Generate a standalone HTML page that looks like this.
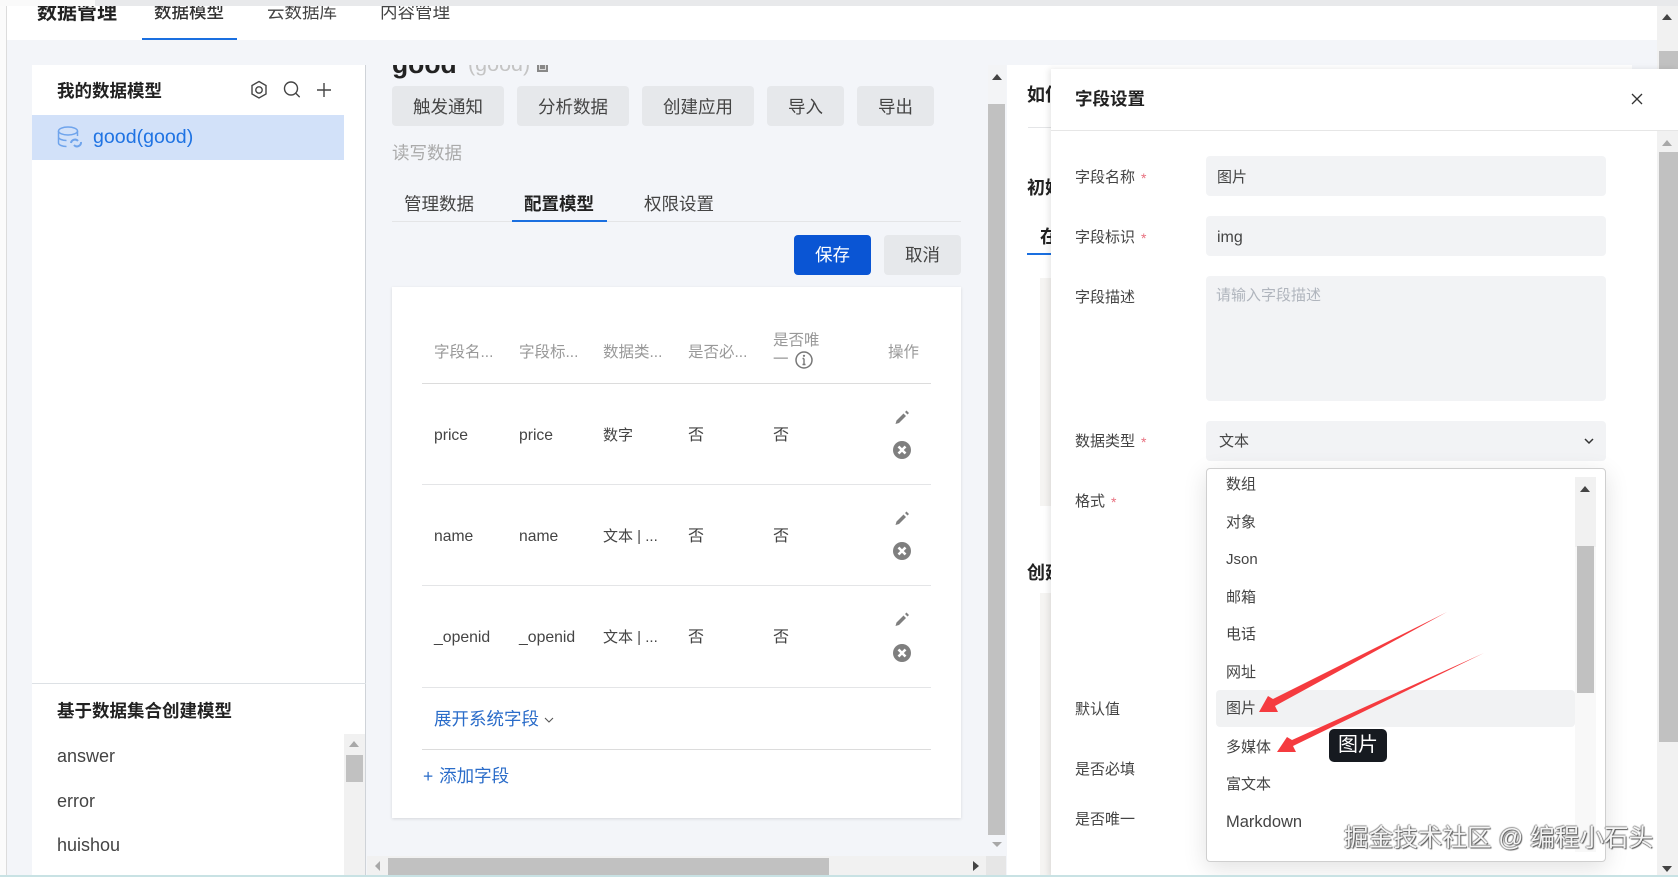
<!DOCTYPE html>
<html lang="zh"><head><meta charset="utf-8"><title>数据模型</title>
<style>
*{box-sizing:border-box}
html,body{margin:0;padding:0;width:1678px;height:877px;overflow:hidden;background:#f3f5f9}
body{position:relative;font-family:"Liberation Sans","Noto Sans CJK SC",sans-serif;color:#333}
.a{position:absolute}
.t{position:absolute;line-height:24px;height:24px;white-space:nowrap}
.btn{position:absolute;top:86px;height:40px;background:#e6e8eb;border-radius:4px;text-align:center;line-height:42px;font-size:17.5px;color:#444}
.h{font-size:15.5px;color:#999}
.c{font-size:16px;color:#444}
.l{font-size:15px;color:#444;left:1075px}
.s{color:#e8707f;font-size:14px;left:1141px}
.i{left:1226px;font-size:15px;color:#444}
.ln{position:absolute;height:1px;background:#e4e5e7}
.inp{position:absolute;left:1206px;width:400px;background:#f2f3f5;border-radius:4px}
.wm{left:1344px;top:824px;font-size:24.6px;line-height:30px;height:30px;color:#f4f4f4;text-shadow:1px 1px 1px #555,-1px 0 1px #888,0 -1px 1px #999}
</style></head><body>

<!-- left strip and top bar -->
<div class="a" style="left:0;top:0;width:7px;height:877px;background:#fbfbfb;border-right:1px solid #dcdcdc"></div>
<div class="a" style="left:7px;top:6px;width:1650px;height:34px;background:#fff"></div>
<div class="t" style="left:37px;top:1px;font-size:20px;font-weight:700;color:#222">数据管理</div>
<div class="t" style="left:154px;top:0;font-size:17.5px;font-weight:500;color:#333">数据模型</div>
<div class="t" style="left:267px;top:0;font-size:17.5px;color:#444">云数据库</div>
<div class="t" style="left:380px;top:0;font-size:17.5px;color:#444">内容管理</div>
<div class="a" style="left:0;top:0;width:1678px;height:6px;background:#e8e9eb"></div>
<div class="a" style="left:0;top:0;width:95px;height:6px;background:#fafafa"></div>
<div class="a" style="left:142px;top:38px;width:95px;height:2px;background:#1a6fe0"></div>

<!-- sidebar -->
<div class="a" style="left:32px;top:65px;width:334px;height:812px;background:#fff;border-right:1px solid #cfd3d8"></div>
<div class="t" style="left:57px;top:79px;font-size:17.5px;font-weight:700;color:#222">我的数据模型</div>
<svg class="a" style="left:248px;top:78px" width="90" height="24" viewBox="0 0 90 24" fill="none" stroke="#444" stroke-width="1.4">
<path d="M11 3.5l7 4v8.500l-7 4-7-4V7.500z"/><circle cx="11" cy="12" r="3.200"/>
<circle cx="43" cy="10.500" r="6.500"/><path d="M47.800 15.300l3.500 3.500" stroke-linecap="round"/>
<path d="M76 5v14M69 12h14"/></svg>
<div class="a" style="left:32px;top:115px;width:312px;height:45px;background:#d2e1f9"></div>
<svg class="a" style="left:57px;top:125px" width="26" height="24" viewBox="0 0 26 24" fill="none" stroke="#6fa4ec" stroke-width="1.500">
<ellipse cx="11" cy="6" rx="9.500" ry="4"/><path d="M1.500 6v12c0 2 4 3.500 8 3.500M1.500 12c0 2 4 3.500 8 3.500M20.500 6v5"/>
<path d="M14 18a4 4 0 0 1 7-2M24 17a4 4 0 0 1-7 3" stroke-width="2"/></svg>
<div class="t" style="left:93px;top:125px;font-size:19.600px;color:#1f73e3">good(good)</div>
<div class="ln" style="left:32px;top:683px;width:334px;background:#dde1e5"></div>
<div class="t" style="left:57px;top:699px;font-size:17.5px;font-weight:700;color:#222">基于数据集合创建模型</div>
<div class="a" style="left:344px;top:734px;width:21px;height:143px;background:#f1f1f1"></div>
<div class="a" style="left:349px;top:741px;border:5px solid transparent;border-bottom:6px solid #a8a8a8;border-top:0"></div>
<div class="a" style="left:346px;top:755px;width:17px;height:27px;background:#c1c1c1"></div>
<div class="t" style="left:57px;top:744px;font-size:18px;color:#444">answer</div>
<div class="t" style="left:57px;top:789px;font-size:18px;color:#444">error</div>
<div class="t" style="left:57px;top:833px;font-size:18px;color:#444">huishou</div>

<!-- middle head -->
<div class="t" style="left:392px;top:46px;height:36px;line-height:36px;font-size:26.500px;font-weight:700;color:#222">good</div>
<div class="t" style="left:468px;top:46px;height:36px;line-height:36px;font-size:21.500px;color:#c4c4c4">(good)</div>
<div class="a" style="left:537px;top:64px;width:11px;height:8px;background:#888;border:2px solid #888;border-top:0;box-shadow:inset 0 0 0 1px #ddd"></div>
<div class="a" style="left:367px;top:40px;width:620px;height:25px;background:#f3f5f9"></div>
<div class="btn" style="left:392px;width:112px">触发通知</div>
<div class="btn" style="left:517px;width:112px">分析数据</div>
<div class="btn" style="left:642px;width:112px">创建应用</div>
<div class="btn" style="left:767px;width:77px">导入</div>
<div class="btn" style="left:857px;width:77px">导出</div>
<div class="t" style="left:392px;top:141px;font-size:17.5px;color:#aaa">读写数据</div>
<div class="t" style="left:404px;top:192px;font-size:17.5px;color:#444">管理数据</div>
<div class="t" style="left:524px;top:192px;font-size:17.5px;font-weight:700;color:#222">配置模型</div>
<div class="t" style="left:644px;top:192px;font-size:17.5px;color:#444">权限设置</div>
<div class="ln" style="left:392px;top:221px;width:569px"></div>
<div class="a" style="left:512px;top:220px;width:95px;height:2px;background:#1a6fe0"></div>
<div class="btn" style="left:794px;top:235px;width:77px;background:#0a55d4;color:#fff;line-height:40px">保存</div>
<div class="btn" style="left:884px;top:235px;width:77px;line-height:40px">取消</div>

<!-- card -->
<div class="a" style="left:392px;top:287px;width:569px;height:531px;background:#fff;box-shadow:0 1px 3px rgba(0,0,0,.12)"></div>
<div class="t h" style="left:434px;top:341px">字段名...</div>
<div class="t h" style="left:519px;top:341px">字段标...</div>
<div class="t h" style="left:603px;top:341px">数据类...</div>
<div class="t h" style="left:688px;top:341px">是否必...</div>
<div class="t h" style="left:773px;top:329px">是否唯</div>
<div class="t h" style="left:773px;top:348px">一</div>
<svg class="a" style="left:794px;top:350px" width="20" height="20" viewBox="0 0 20 20"><circle cx="10" cy="10" r="8" fill="none" stroke="#777" stroke-width="1.500"/><path d="M10 8.500v6M8.500 8.500H10M8.500 14.500h3" stroke="#777" stroke-width="1.400" fill="none"/><circle cx="10" cy="5.800" r="1.100" fill="#777"/></svg>
<div class="t h" style="left:888px;top:341px">操作</div>
<div class="ln" style="left:422px;top:383px;width:509px;background:#dcdcdc"></div>

<div class="t c" style="left:434px;top:423.5px;font-size:15.7px">price</div><div class="t c" style="left:519px;top:423.5px;font-size:15.7px">price</div><div class="t" style="left:603px;top:424px;font-size:15px;color:#444">数字</div><div class="t c" style="left:688px;top:424px">否</div><div class="t c" style="left:773px;top:424px">否</div>
<div class="ln" style="left:422px;top:484px;width:509px"></div>
<div class="t c" style="left:434px;top:525px;font-size:15.7px">name</div><div class="t c" style="left:519px;top:525px;font-size:15.7px">name</div><div class="t" style="left:603px;top:525px;font-size:15px;color:#444">文本 | ...</div><div class="t c" style="left:688px;top:525px">否</div><div class="t c" style="left:773px;top:525px">否</div>
<div class="ln" style="left:422px;top:585px;width:509px"></div>
<div class="t c" style="left:434px;top:626px;font-size:15.8px">_openid</div><div class="t c" style="left:519px;top:626px;font-size:15.8px">_openid</div><div class="t" style="left:603px;top:626px;font-size:15px;color:#444">文本 | ...</div><div class="t c" style="left:688px;top:626px">否</div><div class="t c" style="left:773px;top:626px">否</div>
<div class="ln" style="left:422px;top:687px;width:509px"></div>

<svg class="a" style="left:890px;top:406px" width="24" height="60" viewBox="0 0 24 60"><path d="M5.500 18l1-3.500 7-7 2.500 2.500-7 7zM15 6l1.500-1.500 2.500 2.500-1.500 1.500z" fill="#7f7f7f"/><circle cx="12" cy="44" r="9" fill="#7f7f7f"/><path d="M8.500 40.500l7 7M15.500 40.500l-7 7" stroke="#fff" stroke-width="2.600"/></svg>
<svg class="a" style="left:890px;top:507px" width="24" height="60" viewBox="0 0 24 60"><path d="M5.500 18l1-3.500 7-7 2.500 2.500-7 7zM15 6l1.500-1.500 2.500 2.500-1.500 1.500z" fill="#7f7f7f"/><circle cx="12" cy="44" r="9" fill="#7f7f7f"/><path d="M8.500 40.500l7 7M15.500 40.500l-7 7" stroke="#fff" stroke-width="2.600"/></svg>
<svg class="a" style="left:890px;top:608px" width="24" height="60" viewBox="0 0 24 60"><path d="M5.500 18l1-3.500 7-7 2.500 2.500-7 7zM15 6l1.500-1.500 2.500 2.500-1.500 1.500z" fill="#7f7f7f"/><circle cx="12" cy="45" r="9" fill="#7f7f7f"/><path d="M8.500 41.500l7 7M15.500 41.500l-7 7" stroke="#fff" stroke-width="2.600"/></svg>

<div class="t" style="left:434px;top:707px;font-size:17.5px;color:#2a6cc9">展开系统字段</div>
<svg class="a" style="left:543px;top:716px" width="12" height="8" viewBox="0 0 12 8"><path d="M2 2l4 4 4-4" fill="none" stroke="#555" stroke-width="1.100"/></svg>
<div class="ln" style="left:422px;top:749px;width:509px;background:#dcdcdc"></div>
<div class="t" style="left:423px;top:764px;font-size:17.5px;color:#2a6cc9">+ <span style="margin-left:1px">添加字段</span></div>

<!-- middle scrollbars -->
<div class="a" style="left:988px;top:65px;width:18px;height:40px;background:#f3f4f6"></div>
<div class="a" style="left:992px;top:74px;border:5px solid transparent;border-bottom:6px solid #444;border-top:0"></div>
<div class="a" style="left:988px;top:104px;width:17px;height:731px;background:#c1c1c1"></div>
<div class="a" style="left:992px;top:842px;border:5px solid transparent;border-top:5px solid #a8a8a8;border-bottom:0"></div>
<div class="a" style="left:367px;top:856px;width:639px;height:20px;background:#f1f1f1"></div>
<div class="a" style="left:388px;top:858px;width:441px;height:17px;background:#c1c1c1"></div>
<div class="a" style="left:375px;top:861px;border:5px solid transparent;border-right:5px solid #a8a8a8;border-left:0"></div>
<div class="a" style="left:973px;top:861px;border:5px solid transparent;border-left:6px solid #444;border-right:0"></div>
<div class="a" style="left:986px;top:856px;width:20px;height:20px;background:#e6e6e6"></div>

<!-- right panel behind -->
<div class="a" style="left:1007px;top:65px;width:625px;height:812px;background:#fff"></div>
<div class="t" style="left:1027px;top:83px;font-size:18px;font-weight:700;color:#222">如何</div>
<div class="ln" style="left:1028px;top:127px;width:40px"></div>
<div class="t" style="left:1027px;top:176px;font-size:18px;font-weight:700;color:#222">初始</div>
<div class="t" style="left:1040px;top:225px;font-size:18px;font-weight:700;color:#222">在</div>
<div class="a" style="left:1027px;top:253px;width:30px;height:2px;background:#1a6fe0"></div>
<div class="t" style="left:1027px;top:561px;font-size:18px;font-weight:700;color:#222">创建</div>
<div class="a" style="left:1040px;top:278px;width:12px;height:228px;background:#f5f4f2"></div>
<div class="a" style="left:1040px;top:593px;width:12px;height:284px;background:#f5f4f2"></div>

<!-- page scrollbar top right -->
<div class="a" style="left:1657px;top:6px;width:21px;height:64px;background:#f1f1f1"></div>
<div class="a" style="left:1662px;top:14px;border:5px solid transparent;border-bottom:6px solid #444;border-top:0"></div>
<div class="a" style="left:1659px;top:51px;width:19px;height:19px;background:#c1c1c1"></div>

<!-- drawer -->
<div class="a" style="left:1051px;top:69px;width:627px;height:808px;background:#fff;box-shadow:-2px 0 6px rgba(0,0,0,.1)"></div>
<div class="t" style="left:1075px;top:87px;font-size:17.5px;font-weight:700;color:#222">字段设置</div>
<svg class="a" style="left:1631px;top:93px" width="12" height="12" viewBox="0 0 12 12"><path d="M1 1l10 10M11 1L1 11" stroke="#333" stroke-width="1.300"/></svg>
<div class="ln" style="left:1051px;top:130px;width:627px;background:#e6e6e6"></div>
<div class="a" style="left:1657px;top:131px;width:21px;height:746px;background:#f1f1f1"></div>
<div class="a" style="left:1662px;top:140px;border:5px solid transparent;border-bottom:6px solid #a8a8a8;border-top:0"></div>
<div class="a" style="left:1659px;top:152px;width:19px;height:590px;background:#c1c1c1"></div>
<div class="a" style="left:1662px;top:866px;border:5px solid transparent;border-top:6px solid #444;border-bottom:0"></div>

<div class="t l" style="top:166px">字段名称</div><div class="t s" style="top:166px">*</div>
<div class="t l" style="top:226px">字段标识</div><div class="t s" style="top:226px">*</div>
<div class="t l" style="top:286px">字段描述</div>
<div class="t l" style="top:430px">数据类型</div><div class="t s" style="top:430px">*</div>
<div class="t l" style="top:490px">格式</div><div class="t s" style="top:490px;left:1111px">*</div>
<div class="t l" style="top:698px">默认值</div>
<div class="t l" style="top:758px">是否必填</div>
<div class="t l" style="top:808px">是否唯一</div>

<div class="inp" style="top:156px;height:40px"></div>
<div class="t" style="left:1217px;top:166px;font-size:15px;color:#444">图片</div>
<div class="inp" style="top:216px;height:40px"></div>
<div class="t" style="left:1217px;top:226px;font-size:16px;color:#444">img</div>
<div class="inp" style="top:276px;height:125px"></div>
<div class="t" style="left:1216px;top:284px;font-size:15px;color:#b0b5bd">请输入字段描述</div>
<div class="inp" style="top:421px;height:40px"></div>
<div class="t" style="left:1219px;top:430px;font-size:15px;color:#444">文本</div>
<svg class="a" style="left:1583px;top:436px" width="12" height="10" viewBox="0 0 12 10"><path d="M2 3l4 4 4-4" fill="none" stroke="#333" stroke-width="1.500"/></svg>

<!-- dropdown -->
<div class="a" style="left:1206px;top:468px;width:400px;height:394px;background:#fff;border:1px solid #cfcfcf;border-radius:4px;box-shadow:0 6px 24px rgba(0,0,0,.12)"></div>
<div class="a" style="left:1575px;top:477px;width:21px;height:70px;background:#f1f1f1"></div>
<div class="a" style="left:1575px;top:547px;width:21px;height:305px;background:#f8f8f8"></div>
<div class="a" style="left:1580px;top:486px;border:5px solid transparent;border-bottom:6px solid #444;border-top:0"></div>
<div class="a" style="left:1577px;top:546px;width:17px;height:147px;background:#c1c1c1"></div>
<div class="a" style="left:1216px;top:690px;width:359px;height:37px;background:#f1f2f3;border-radius:4px"></div>
<div class="t i" style="top:472.5px">数组</div>
<div class="t i" style="top:511px">对象</div>
<div class="t i" style="top:548px">Json</div>
<div class="t i" style="top:585px;margin-top:1px">邮箱</div>
<div class="t i" style="top:623px">电话</div>
<div class="t i" style="top:661px">网址</div>
<div class="t i" style="top:697px">图片</div>
<div class="t i" style="top:736px">多媒体</div>
<div class="t i" style="top:773px">富文本</div>
<div class="t i" style="top:810px;font-size:16.5px">Markdown</div>

<div class="a" style="left:1329px;top:729px;width:58px;height:33px;background:#161a20;border-radius:5px;color:#fff;font-size:20px;line-height:33px;text-align:center">图片</div>

<!-- red arrows -->
<svg class="a" style="left:1240px;top:600px" width="260" height="170" viewBox="1240 600 260 170">
<path d="M1447 612L1273 699 1268 696 1259 712 1278 712 1275 706z" fill="#f53b3f"/>
<path d="M1484 653L1292 740 1287 737 1277 752 1296 752 1293 746z" fill="#f53b3f"/>
</svg>

<div class="t wm">掘金技术社区 @ 编程小石头</div>

<div class="a" style="left:0;top:875px;width:1678px;height:2px;background:#c8e2e4"></div>
</body></html>
